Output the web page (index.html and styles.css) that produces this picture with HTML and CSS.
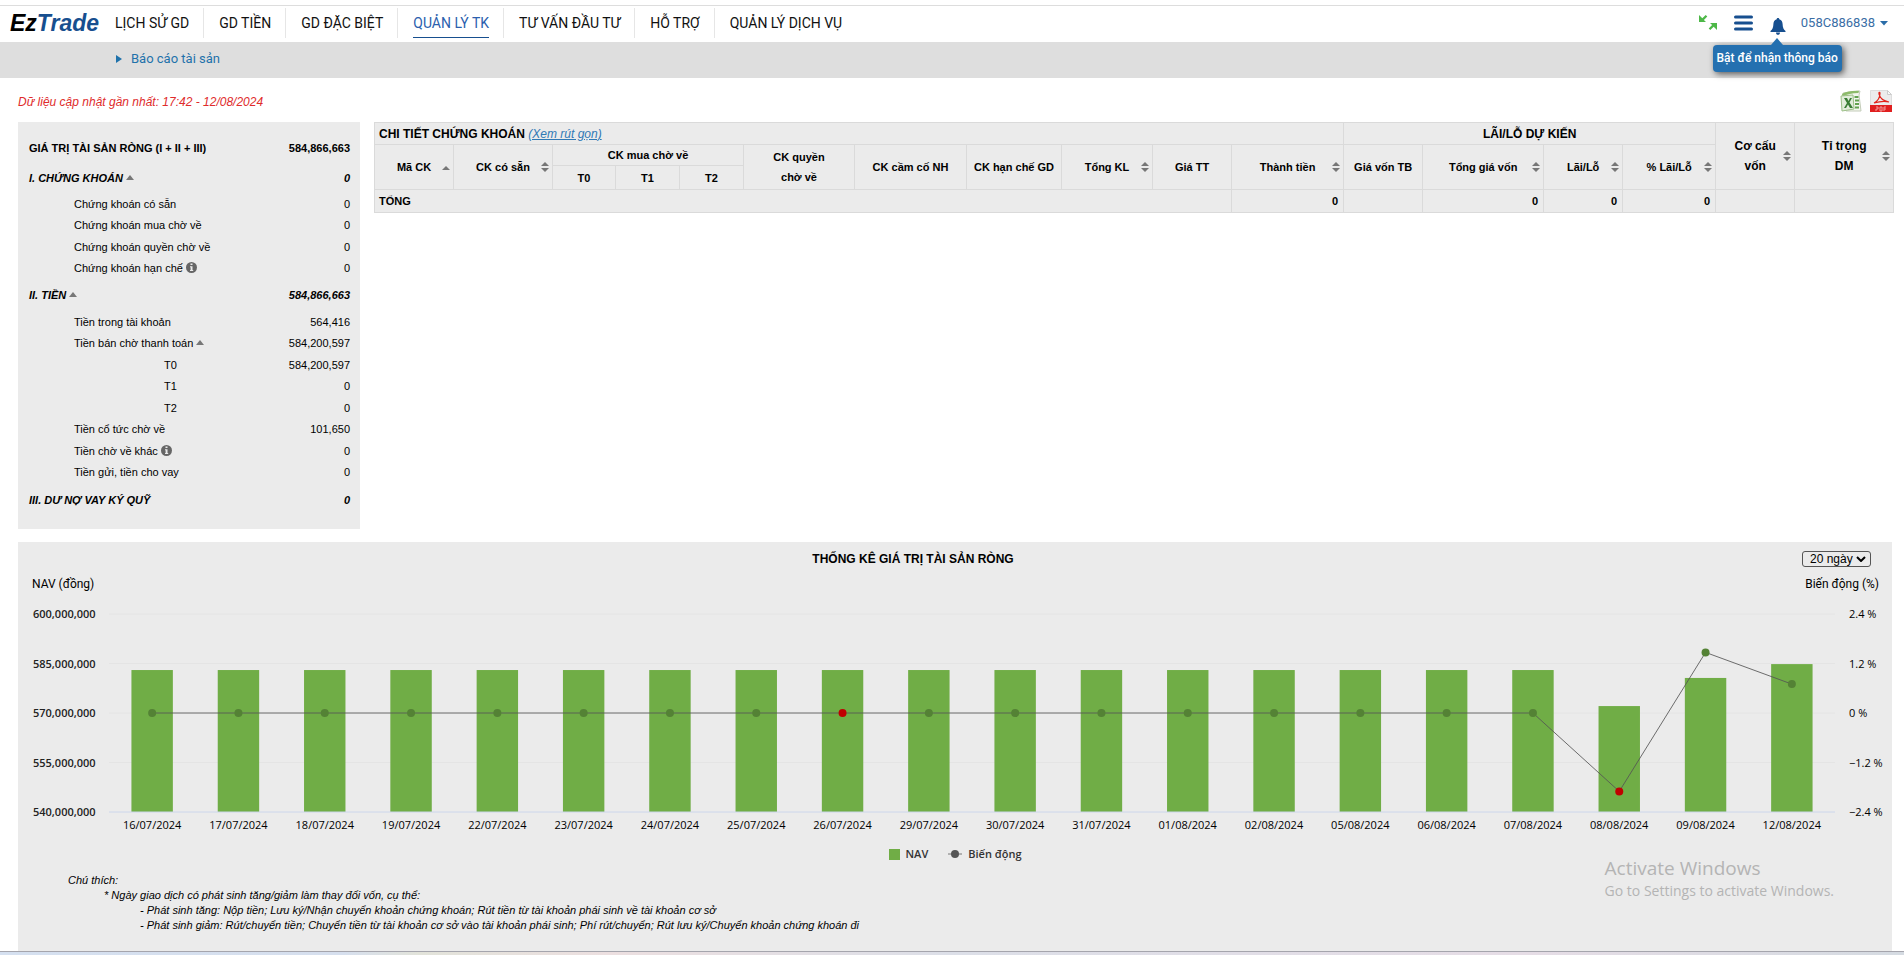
FILE: index.html
```html
<!DOCTYPE html>
<html lang="vi">
<head>
<meta charset="utf-8">
<title>EzTrade - Báo cáo tài sản</title>
<link rel="stylesheet" href="styles.css">
</head>
<body>
<header class="topbar">
  <a class="logo" href="#"><span class="logo-ez">Ez</span>Trade</a>
  <nav class="menu">
    <a href="#">LỊCH SỬ GD</a>
    <a href="#">GD TIỀN</a>
    <a href="#">GD ĐẶC BIỆT</a>
    <a href="#" class="active"><span>QUẢN LÝ TK</span></a>
    <a href="#">TƯ VẤN ĐẦU TƯ</a>
    <a href="#">HỖ TRỢ</a>
    <a href="#">QUẢN LÝ DỊCH VỤ</a>
  </nav>
  <div class="tools">
    <button class="icon-btn" aria-label="Thu nhỏ">
      <svg width="18" height="18" viewBox="0 0 18 18"><g fill="#4db848"><path d="M0 1v7h7L4.900 5.900 8.300 2.500 6.700 .9 3.300 4.300z"/><path d="M18 17v-7h-7l2.100 2.100-3.400 3.400 1.600 1.600 3.400-3.400z" transform="translate(0 -1)"/></g></svg>
    </button>
    <button class="icon-btn" aria-label="Danh mục">
      <svg width="19" height="16" viewBox="0 0 19 16"><path d="M1.500 2h16M1.500 8h16M1.500 14h16" stroke="#174f8f" stroke-width="3" stroke-linecap="round"/></svg>
    </button>
    <div class="bell">
      <button class="icon-btn" aria-label="Thông báo">
        <svg width="16" height="17" viewBox="0 0 16 17"><path d="M8 0c.8 0 1.300.5 1.300 1.300C11.600 2 12.500 3.800 12.600 6c.1 3.500.9 5.600 2.900 7v1H.5v-1c2-1.400 2.800-3.500 2.900-7 .1-2.200 1-4 3.300-4.700C6.700.5 7.200 0 8 0zM6 14.500h4c0 1.500-.8 2.300-2 2.300s-2-.8-2-2.300z" fill="#174f8f"/></svg>
      </button>
      <div class="tooltip" role="tooltip">Bật để nhận thông báo</div>
    </div>
    <button class="user">058C886838<svg width="8" height="5" viewBox="0 0 8 5"><path d="M0 0h8L4 4.500z" fill="#2a6ca8"/></svg></button>
  </div>
</header>
<div class="subnav"><a href="#"><svg width="6" height="8" viewBox="0 0 6 8"><path d="M0 0l6 4-6 4z" fill="#1f72ab"/></svg>Báo cáo tài sản</a></div>

<main class="page">
  <div class="update-row">
    <p class="updated">Dữ liệu cập nhật gần nhất: 17:42 - 12/08/2024</p>
    <div class="exports">
      <button class="icon-btn" aria-label="Xuất Excel">
        <svg width="22" height="22" viewBox="0 0 22 22"><path d="M3 3L20 1l-1 4 2 16H6z" fill="#f3f6ee" stroke="#c3ccb9"/><path d="M2 4C6 1 12 .5 19 .7L18.500 3C12 3 7 4 2.500 7z" fill="#8dbb6a"/><path d="M1 6l12-1 1 14L2 21z" fill="#e2eddb" stroke="#9cbf87"/><path d="M4 8h3l1.500 3L10 8h2l-2.500 4.500L13 18h-3l-2-3.500L6 18H4l3-5z" fill="#3a7d35"/><path d="M14.500 7h4M15 10.500h4M15 14h4M15 17.500h4" stroke="#62a24e" stroke-width="2"/></svg>
      </button>
      <button class="icon-btn" aria-label="Xuất PDF">
        <svg width="22" height="22" viewBox="0 0 22 22"><path d="M.5.500h17l4 4v17H.5z" fill="#ececec" stroke="#ddd"/><path d="M17.500.500v4h4z" fill="#fafafa" stroke="#ccc"/><path d="M4 13c4-2 6-6 6-10 0-1-1.500-1-1 1 1 4 4 7 10 8-5-1.500-10-.5-15 1z" fill="none" stroke="#e2231a" stroke-width="1.200"/><path d="M0 15h22v7H0z" fill="#e01f1f"/><path d="M6 17h2v2H6v2m4-4v4h2v-4zm4 4v-4h2m-2 2h2" fill="none" stroke="#f39a9a"/></svg>
      </button>
    </div>
  </div>

  <div class="overview">
    <section class="assets">
      <dl>
        <div class="total"><dt>GIÁ TRỊ TÀI SẢN RÒNG (I + II + III)</dt><dd>584,866,663</dd></div>
        <div class="group"><dt>I. CHỨNG KHOÁN <i class="tri"></i></dt><dd>0</dd></div>
      </dl>
      <dl class="sub">
        <div><dt>Chứng khoán có sẵn</dt><dd>0</dd></div>
        <div><dt>Chứng khoán mua chờ về</dt><dd>0</dd></div>
        <div><dt>Chứng khoán quyền chờ về</dt><dd>0</dd></div>
        <div><dt>Chứng khoán hạn chế <svg class="info" width="11" height="11" viewBox="0 0 11 11"><circle cx="5.500" cy="5.500" r="5.500" fill="#666"/><path d="M4.500 1.500h2v1.600h-2zM4 4.200h2.500V8H7.200v1H4V8h.6V5.200H4z" fill="#ebebeb"/></svg></dt><dd>0</dd></div>
      </dl>
      <dl><div class="group money"><dt>II. TIỀN <i class="tri"></i></dt><dd>584,866,663</dd></div></dl>
      <dl class="sub">
        <div><dt>Tiền trong tài khoản</dt><dd>564,416</dd></div>
        <div><dt>Tiền bán chờ thanh toán <i class="tri"></i></dt><dd>584,200,597</dd></div>
        <div class="deep"><dt>T0</dt><dd>584,200,597</dd></div>
        <div class="deep"><dt>T1</dt><dd>0</dd></div>
        <div class="deep"><dt>T2</dt><dd>0</dd></div>
        <div><dt>Tiền cổ tức chờ về</dt><dd>101,650</dd></div>
        <div><dt>Tiền chờ về khác <svg class="info" width="11" height="11" viewBox="0 0 11 11"><circle cx="5.500" cy="5.500" r="5.500" fill="#666"/><path d="M4.500 1.500h2v1.600h-2zM4 4.200h2.500V8H7.200v1H4V8h.6V5.200H4z" fill="#ebebeb"/></svg></dt><dd>0</dd></div>
        <div><dt>Tiền gửi, tiền cho vay</dt><dd>0</dd></div>
      </dl>
      <dl><div class="group loan"><dt>III. DƯ NỢ VAY KÝ QUỸ</dt><dd>0</dd></div></dl>
    </section>

    <table class="stocks">
      <colgroup>
        <col class="w79"><col class="w99"><col class="w63"><col class="w64"><col class="w64"><col class="w111"><col class="w112"><col class="w95"><col class="w91"><col class="w79"><col class="w112"><col class="w79"><col class="w121"><col class="w79"><col class="w93"><col class="w79"><col class="w99">
      </colgroup>
      <thead>
        <tr class="r-title">
          <th colspan="11" class="left big">CHI TIẾT CHỨNG KHOÁN <a href="#">(Xem rút gọn)</a></th>
          <th colspan="4" class="big">LÃI/LỖ DỰ KIẾN</th>
          <th rowspan="3" class="big"><div class="sort">Cơ cấu<br>vốn</div></th>
          <th rowspan="3" class="big"><div class="sort">Tỉ trọng<br>DM</div></th>
        </tr>
        <tr class="r-head">
          <th rowspan="2"><div class="sort up">Mã CK</div></th>
          <th rowspan="2"><div class="sort">CK có sẵn</div></th>
          <th colspan="3">CK mua chờ về</th>
          <th rowspan="2">CK quyền<br>chờ về</th>
          <th rowspan="2">CK cầm cố NH</th>
          <th rowspan="2">CK hạn chế GD</th>
          <th rowspan="2"><div class="sort">Tổng KL</div></th>
          <th rowspan="2">Giá TT</th>
          <th rowspan="2"><div class="sort">Thành tiền</div></th>
          <th rowspan="2">Giá vốn TB</th>
          <th rowspan="2"><div class="sort">Tổng giá vốn</div></th>
          <th rowspan="2"><div class="sort">Lãi/Lỗ</div></th>
          <th rowspan="2"><div class="sort">% Lãi/Lỗ</div></th>
        </tr>
        <tr class="r-days"><th>T0</th><th>T1</th><th>T2</th></tr>
      </thead>
      <tbody>
        <tr class="r-sum"><th colspan="10" class="left">TỔNG</th><td>0</td><td></td><td>0</td><td>0</td><td>0</td><td></td><td></td></tr>
      </tbody>
    </table>
  </div>

  <section class="chart">
    <div class="chart-head">
      <h2>THỐNG KÊ GIÁ TRỊ TÀI SẢN RÒNG</h2>
      <div class="select-wrap">
        <select aria-label="Số ngày"><option>20 ngày</option></select>
        <svg class="chev" width="10" height="6" viewBox="0 0 10 6"><path d="M1 1l4 4 4-4" fill="none" stroke="#000" stroke-width="2"/></svg>
      </div>
    </div>
    <div class="axis-titles"><span>NAV (đồng)</span><span>Biến động (%)</span></div>
    <div class="plot-row">
      <div class="axis axis-nav"><span>600,000,000</span><span>585,000,000</span><span>570,000,000</span><span>555,000,000</span><span>540,000,000</span></div>
      <div class="plot">
        <svg class="graph" role="img" aria-label="NAV và biến động theo ngày">
          <g class="grid"><line x1="0" x2="100%" y1="0" y2="0"/><line x1="0" x2="100%" y1="25%" y2="25%"/><line x1="0" x2="100%" y1="50%" y2="50%"/><line x1="0" x2="100%" y1="75%" y2="75%"/></g>
          <g class="bars">
            <rect x="1.300%" y="28.300%" width="2.400%" height="71.700%"/><rect x="6.300%" y="28.300%" width="2.400%" height="71.700%"/><rect x="11.300%" y="28.300%" width="2.400%" height="71.700%"/><rect x="16.300%" y="28.300%" width="2.400%" height="71.700%"/><rect x="21.300%" y="28.300%" width="2.400%" height="71.700%"/>
            <rect x="26.300%" y="28.300%" width="2.400%" height="71.700%"/><rect x="31.300%" y="28.300%" width="2.400%" height="71.700%"/><rect x="36.300%" y="28.300%" width="2.400%" height="71.700%"/><rect x="41.300%" y="28.300%" width="2.400%" height="71.700%"/><rect x="46.300%" y="28.300%" width="2.400%" height="71.700%"/>
            <rect x="51.300%" y="28.300%" width="2.400%" height="71.700%"/><rect x="56.300%" y="28.300%" width="2.400%" height="71.700%"/><rect x="61.300%" y="28.300%" width="2.400%" height="71.700%"/><rect x="66.300%" y="28.300%" width="2.400%" height="71.700%"/><rect x="71.300%" y="28.300%" width="2.400%" height="71.700%"/>
            <rect x="76.300%" y="28.300%" width="2.400%" height="71.700%"/><rect x="81.300%" y="28.300%" width="2.400%" height="71.700%"/><rect x="86.300%" y="46.500%" width="2.400%" height="53.500%"/><rect x="91.300%" y="32.300%" width="2.400%" height="67.700%"/><rect x="96.300%" y="25.300%" width="2.400%" height="74.700%"/>
          </g>
          <line class="base" x1="0" x2="100%" y1="100%" y2="100%"/>
          <g class="trend"><line x1="2.500%" y1="50%" x2="82.500%" y2="50%"/><line x1="82.500%" y1="50%" x2="87.500%" y2="89.600%"/><line x1="87.500%" y1="89.600%" x2="92.500%" y2="19.400%"/><line x1="92.500%" y1="19.400%" x2="97.500%" y2="35.400%"/></g>
          <g class="dots">
            <circle cx="2.500%" cy="50%" r="4"/><circle cx="7.500%" cy="50%" r="4"/><circle cx="12.500%" cy="50%" r="4"/><circle cx="17.500%" cy="50%" r="4"/><circle cx="22.500%" cy="50%" r="4"/><circle cx="27.500%" cy="50%" r="4"/><circle cx="32.500%" cy="50%" r="4"/><circle cx="37.500%" cy="50%" r="4"/><circle class="down" cx="42.500%" cy="50%" r="4"/><circle cx="47.500%" cy="50%" r="4"/>
            <circle cx="52.500%" cy="50%" r="4"/><circle cx="57.500%" cy="50%" r="4"/><circle cx="62.500%" cy="50%" r="4"/><circle cx="67.500%" cy="50%" r="4"/><circle cx="72.500%" cy="50%" r="4"/><circle cx="77.500%" cy="50%" r="4"/><circle cx="82.500%" cy="50%" r="4"/><circle class="down" cx="87.500%" cy="89.600%" r="4"/><circle cx="92.500%" cy="19.400%" r="4"/><circle cx="97.500%" cy="35.400%" r="4"/>
          </g>
        </svg>
        <div class="dates"><span>16/07/2024</span><span>17/07/2024</span><span>18/07/2024</span><span>19/07/2024</span><span>22/07/2024</span><span>23/07/2024</span><span>24/07/2024</span><span>25/07/2024</span><span>26/07/2024</span><span>29/07/2024</span><span>30/07/2024</span><span>31/07/2024</span><span>01/08/2024</span><span>02/08/2024</span><span>05/08/2024</span><span>06/08/2024</span><span>07/08/2024</span><span>08/08/2024</span><span>09/08/2024</span><span>12/08/2024</span></div>
      </div>
      <div class="axis axis-pct"><span>2.4 %</span><span>1.2 %</span><span>0 %</span><span>−1.2 %</span><span>−2.4 %</span></div>
    </div>
    <div class="legend">
      <span><i class="swatch"></i>NAV</span>
      <span><svg width="14" height="8" viewBox="0 0 14 8"><path d="M0 4h14" stroke="#777"/><circle cx="7" cy="4" r="4" fill="#555"/></svg>Biến động</span>
    </div>
    <div class="notes">
      <p>Chú thích:</p>
      <p class="n1">* Ngày giao dịch có phát sinh tăng/giảm làm thay đổi vốn, cụ thể:</p>
      <p class="n2">- Phát sinh tăng: Nộp tiền; Lưu ký/Nhận chuyển khoản chứng khoán; Rút tiền từ tài khoản phái sinh về tài khoản cơ sở</p>
      <p class="n2">- Phát sinh giảm: Rút/chuyển tiền; Chuyển tiền từ tài khoản cơ sở vào tài khoản phái sinh; Phí rút/chuyển; Rút lưu ký/Chuyển khoản chứng khoán đi</p>
    </div>
    <div class="activate"><strong>Activate Windows</strong><span>Go to Settings to activate Windows.</span></div>
  </section>
</main>
<div class="taskbar"></div>
</body>
</html>
```
FILE: styles.css
```css
* { box-sizing: border-box; }
body {
  margin: 0;
  min-height: 100vh;
  display: flex;
  flex-direction: column;
  padding-top: 5px;
  background: #fff;
  color: #000;
  font: 11px/16px "Liberation Sans", Arial, sans-serif;
}
a { text-decoration: none; }
p, h2, dl, dd { margin: 0; }
button { border: 0; padding: 0; background: none; font: inherit; cursor: pointer; }
.icon-btn, .icon-btn svg { display: block; }

.topbar {
  display: flex;
  align-items: center;
  height: 37px;
  border-top: 1px solid #ddd;
  padding: 0 16px 2px 10px;
  font-family: Roboto, sans-serif;
}
.logo {
  width: 90px;
  font: italic bold 23px/34px "Liberation Sans", Arial, sans-serif;
  color: #174f8f;
}
.logo-ez { color: #000; }
.menu { display: flex; }
.menu a {
  padding: 0 14px 0 15px;
  border-right: 1px solid #e6e6e6;
  font-size: 14px;
  line-height: 30px;
  color: #111;
  white-space: nowrap;
}
.menu a:last-child { border-right: 0; }
.menu .active { color: #2b5fae; }
.menu .active span { display: block; line-height: 28px; border-bottom: 1px solid #174f8f; }
.menu a.active { padding-top: 1px; }

.tools { display: flex; align-items: center; margin-left: auto; }
.tools .icon-btn { margin-right: 17px; }
.bell { position: relative; padding-top: 6px; }
.bell .icon-btn { margin-right: 15px; }
.tooltip {
  position: absolute;
  z-index: 2;
  top: 33px;
  right: -41px;
  padding: 0 4px;
  border-radius: 4px;
  background: #2470b0;
  box-shadow: 2px 2px 6px rgba(0, 0, 0, .6);
  color: #fff;
  font-size: 12px;
  font-weight: 500;
  line-height: 27px;
  white-space: nowrap;
}
.tooltip::before {
  content: "";
  position: absolute;
  top: -7px;
  left: 58px;
  border: 6px solid transparent;
  border-top: 0;
  border-bottom: 7px solid #2470b0;
}
.user { display: flex; align-items: center; gap: 5px; color: #3a6ea5; font-size: 13px; }

.subnav { height: 36px; background: #dedede; padding-left: 116px; }
.subnav a {
  display: inline-flex;
  align-items: center;
  gap: 9px;
  color: #1f72ab;
  font: 13px/33px Roboto, sans-serif;
}

.page { flex: 1; display: flex; flex-direction: column; padding: 0 12px 0 18px; }
.update-row { display: flex; justify-content: space-between; align-items: center; height: 44px; padding-top: 2px; }
.updated { padding-top: 1px; color: #e02b2b; font-size: 12px; font-style: italic; }
.exports { display: flex; gap: 8px; }

.overview { display: flex; align-items: flex-start; gap: 14px; }
.assets { flex: 0 0 342px; padding: 11px 10px 12px 11px; background: #ebebeb; }
.assets dl > div { display: flex; justify-content: space-between; align-items: center; height: 21px; }
.assets .sub > div { padding-left: 45px; }
.assets .sub > div:nth-child(even) { height: 22px; }
.assets .sub > .deep { padding-left: 135px; }
.assets dl > .total, .assets dl > .group { height: 30px; font-weight: bold; }
.assets dl > .group { font-style: italic; }
.assets dl > .money { height: 32px; }
.assets dl > .loan { height: 34px; }
.tri {
  display: inline-block;
  vertical-align: 2px;
  border: 4px solid transparent;
  border-top: 0;
  border-bottom: 5px solid #777;
}
.info { vertical-align: -1px; }

.stocks {
  flex: 1;
  width: 0;
  table-layout: fixed;
  border-collapse: collapse;
  background: #ebebeb;
  border: 1px solid #dadada;
}
.stocks th, .stocks td { border: 1px solid #dadada; padding: 0 4px; }
.stocks th { font-weight: bold; line-height: 20px; white-space: nowrap; }
.stocks td { font-weight: bold; text-align: right; padding-right: 5px; }
.stocks .big { font-size: 12px; }
.stocks .left { text-align: left; }
.stocks a { color: #3079b5; font-weight: normal; font-style: italic; text-decoration: underline; }
.r-title { height: 22px; }
.r-head { height: 21px; }
.r-days { height: 24px; }
.r-sum { height: 23px; }
.sort { position: relative; }
.sort::before, .sort::after {
  content: "";
  position: absolute;
  right: -1px;
  top: calc(50% - 5px);
  border: 4px solid transparent;
  border-top: 0;
  border-bottom: 4px solid #777;
}
.sort::after { top: calc(50% + 1px); border-bottom: 0; border-top: 4px solid #777; }
.sort.up::before { top: calc(50% - 1px); }
.sort.up::after { display: none; }
.w63 { width: 63px; }
.w64 { width: 64px; }
.w79 { width: 79px; }
.w91 { width: 91px; }
.w93 { width: 93px; }
.w95 { width: 95px; }
.w99 { width: 99px; }
.w111 { width: 111px; }
.w112 { width: 112px; }
.w121 { width: 121px; }

.chart { position: relative; flex: 1; margin-top: 13px; background: #ebebeb; }
.chart-head { display: flex; align-items: center; height: 33px; padding: 0 21px 0 6px; }
.chart-head h2 { flex: 1; font-size: 12px; text-align: center; }
.select-wrap { position: relative; display: flex; }
.select-wrap select {
  appearance: none;
  width: 69px;
  height: 16px;
  padding: 0 0 0 7px;
  border: 1px solid #555;
  border-radius: 3px;
  background: #ebebeb;
  color: #000;
  font: 12px/14px "Liberation Sans", Arial, sans-serif;
}
.chev { position: absolute; right: 5px; top: 5px; pointer-events: none; }
.axis-titles {
  display: flex;
  justify-content: space-between;
  padding: 0 13px 0 14px;
  height: 31px;
  font: 12px/18px Roboto, sans-serif;
}
.plot-row { display: flex; padding: 0 12px 0 15px; }
.axis {
  display: flex;
  flex-direction: column;
  justify-content: space-between;
  height: 214px;
  font: 11px/16px "Open Sans", sans-serif;
}
.axis-nav { width: 76px; font-weight: 600; color: #222; }
.axis-pct { width: 45px; padding-left: 14px; font-weight: 500; white-space: nowrap; }
.plot { flex: 1; padding-top: 8px; }
.graph { display: block; width: 100%; height: 198px; overflow: visible; }
.grid line { stroke: #e4e4e4; }
.bars rect { fill: #70ad46; }
.base { stroke: #ccd6eb; }
.trend line { stroke: #555; stroke-opacity: .85; }
.dots circle { fill: #548235; }
.dots .down { fill: #c00000; }
.dates { display: flex; padding-top: 5px; font: 11px/16px "Open Sans", sans-serif; }
.dates span { flex: 1 1 0; width: 0; text-align: center; white-space: nowrap; }
.legend {
  display: flex;
  justify-content: center;
  gap: 20px;
  padding-top: 13px;
  font: 600 11px/16px "Open Sans", sans-serif;
  color: #333;
}
.legend span { display: flex; align-items: center; gap: 6px; }
.swatch { width: 11px; height: 11px; background: #70ad46; }
.notes { padding: 11px 0 14px 50px; font-style: italic; line-height: 15px; }
.notes .n1 { padding-left: 36px; }
.notes .n2 { padding-left: 72px; }
.activate {
  position: absolute;
  right: 58px;
  bottom: 50px;
  color: #b4b4b4;
  font: 14px/20px "Open Sans", sans-serif;
}
.activate strong { display: block; font-size: 19px; font-weight: 400; line-height: 26px; }
.taskbar {
  flex: none;
  height: 4px;
  border-top: 1px solid #a5a5ad;
  background: linear-gradient(90deg, #d5e0f0, #d6dfee 18%, #e2e3da 22%, #ecdfe0 32%, #dcdfe8 50%, #e6dde6 80%, #d5dbe2);
}
```
